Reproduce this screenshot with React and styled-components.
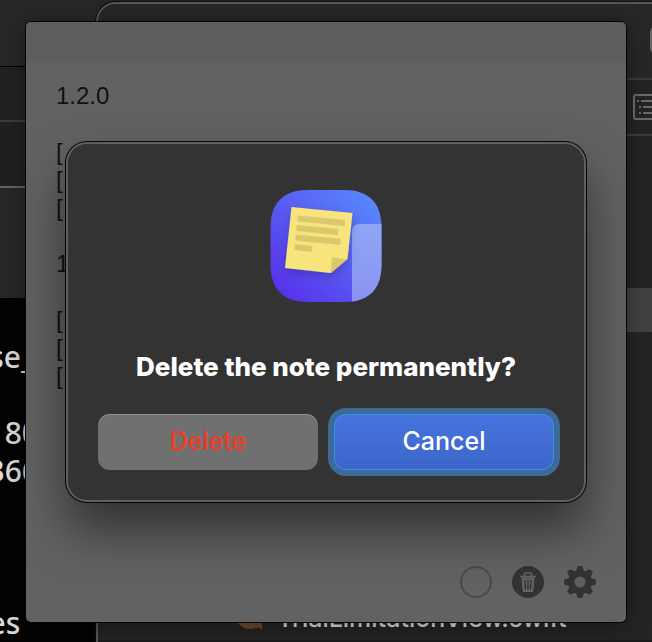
import React from "react";
import styled, { createGlobalStyle } from "styled-components";

const noteText = `1.2.0

[
[
[

1.1.0

[
[
[`;

const terminalLines = [
  { text: "se_\u2009", top: 337 },
  { text: "80", top: 413 },
  { text: "366", top: 451 },
  { text: "es\u00a0\u00a0\u200a", top: 603 },
];

const GlobalStyle = createGlobalStyle`
  * {
    box-sizing: border-box;
  }
  body {
    margin: 0;
    background: #202020;
  }
`;

const Desktop = styled.div`
  position: relative;
  min-height: 100vh;
  overflow: hidden;
  background: #262626;
  font-family: Inter, "Liberation Sans", sans-serif;
`;

const SideWindow = styled.div`
  position: absolute;
  inset: 0 auto 0 -62px;
  width: 160px;
  display: flex;
  flex-direction: column;
  background: #030303;
`;

const SideBar = styled.div`
  height: ${(props) => props.$height}px;
  background: ${(props) => props.$color};
  border-bottom: ${(props) => props.$line};
`;

const TerminalLine = styled.span`
  position: absolute;
  top: ${(props) => props.$top}px;
  right: 59px;
  font-family: "Noto Sans", sans-serif;
  font-size: 30px;
  font-weight: 500;
  line-height: 40px;
  white-space: pre;
  color: #dcdcdc;
`;

const EditorWindow = styled.div`
  position: absolute;
  inset: 2px -60px -40px 96px;
  display: flex;
  flex-direction: column;
  overflow: hidden;
  background: #242424;
  border: 2px solid #575757;
  border-radius: 20px;
  box-shadow: 0 0 0 1px #0a0a0a;
`;

const EditorToolbar = styled.div`
  display: flex;
  justify-content: flex-end;
  padding: 22px 18px 0 0;
  height: 76px;
  background: #272727;
  border-bottom: 2px solid #3b3b3b;
`;

const ToolbarField = styled.div`
  width: 42px;
  height: 28px;
  background: #686868;
  border-radius: 6px;
`;

const EditorTabs = styled.div`
  display: flex;
  align-items: center;
  justify-content: flex-end;
  height: 56px;
  padding-right: 49px;
  border-bottom: 2px solid #3b3b3b;
`;

const SelectedRow = styled.div`
  height: 44px;
  margin-top: 152px;
  background: #424242;
`;

const FileRow = styled.div`
  display: flex;
  align-items: center;
  gap: 14px;
  height: 46px;
  margin-top: 264px;
  padding-left: 137px;
  border-bottom: 2px solid #1c1b1b;
  font-size: 25px;
  font-weight: 500;
  color: #dddddd;
`;

const NoteWindow = styled.main`
  position: absolute;
  inset: 22px 26px 20px;
  display: flex;
  flex-direction: column;
  overflow: hidden;
  background: #626262;
  border-radius: 5px;
  box-shadow: 0 0 0 1px #050505, 0 4px 24px rgba(0, 0, 0, 0.4);
`;

const NoteTitleBar = styled.div`
  height: 40px;
  background: #5e5e5e;
`;

const NoteInput = styled.textarea`
  flex: 1;
  min-height: 0;
  padding: 20px 30px;
  border: 0;
  outline: 0;
  resize: none;
  overflow: hidden;
  background: transparent;
  font-family: "Liberation Sans", sans-serif;
  font-size: 24px;
  line-height: 28px;
  color: #111111;
`;

const NoteFooter = styled.div`
  display: flex;
  justify-content: flex-end;
  gap: 18px;
  padding: 0 29px 23px;
`;

const IconButton = styled.button`
  display: flex;
  padding: 0;
  border: 0;
  background: transparent;
  color: #333333;
`;

const DialogLayer = styled.div`
  position: absolute;
  inset: 22px 26px 20px;
  display: grid;
  place-items: center;
  overflow: hidden;
`;

const Dialog = styled.section`
  display: flex;
  flex-direction: column;
  align-items: center;
  width: calc(100% - 80px);
  max-width: 520px;
  padding: 45px 30px 30px;
  background: #333333;
  border: 2px solid #5f5f5f;
  border-radius: 21px;
  box-shadow: 0 0 0 1px #050505, 0 28px 50px rgba(0, 0, 0, 0.5);
`;

const DialogTitle = styled.h1`
  margin: 46px 0 29px;
  font-size: 26px;
  font-weight: 800;
  line-height: 36px;
  color: #ffffff;
`;

const DialogActions = styled.div`
  display: grid;
  grid-template-columns: 1fr 1fr;
  gap: 16px;
  width: 100%;
`;

const DialogButton = styled.button`
  height: 56px;
  padding: 0 0 2px;
  border: 0;
  border-radius: 12px;
  background: #707070;
  box-shadow: inset 0 1px #929292;
  font-family: inherit;
  font-size: 25px;
  font-weight: 500;
  color: #f23b22;
`;

const PrimaryButton = styled(DialogButton)`
  background: linear-gradient(#4674df, #3c66c8);
  box-shadow: inset 0 0 0 1px #438be8, 0 0 0 6px #3d6b98;
  color: #ffffff;
`;

function ListIcon() {
  return (
    <svg width="28" height="26" viewBox="0 0 28 26" fill="none" stroke="#6b6b6b" strokeWidth="2">
      <rect x="1" y="1" width="26" height="24" rx="2" />
      <path d="M4 7h2M8 7h12M6 13h2M10 13h12M6 19h2M10 19h12" />
    </svg>
  );
}

function SwiftIcon() {
  return (
    <svg width="28" height="24" viewBox="0 0 28 24" fill="#6c4930">
      <path d="M0 13c7 4 13 4 16 2C11 11 6 6 3 2c5 4 10 8 13 10-3-3-6-7-8-10 5 5 9 8 12 10 1-4 0-7-2-11 6 4 8 10 7 14 2 3 3 5 2 9-2-3-4-3-7-2-8 3-15-1-20-9z" />
    </svg>
  );
}

function AppIcon() {
  return (
    <svg width="112" height="114" viewBox="0 0 112 114">
      <defs>
        <linearGradient id="tile" x1="0.1" y1="0.9" x2="0.9" y2="0.05">
          <stop offset="0" stopColor="#5832eb" />
          <stop offset="1" stopColor="#5889fb" />
        </linearGradient>
        <linearGradient id="panel" x1="0" y1="0" x2="0" y2="1">
          <stop offset="0" stopColor="#8da7f5" />
          <stop offset="1" stopColor="#8c91f0" />
        </linearGradient>
        <clipPath id="shape">
          <path d="M38.500 1h35c26 0 38 13 38 38v36c0 25-12 38-38 38h-35c-26 0-38-13-38-38V39c0-25 12-38 38-38z" />
        </clipPath>
        <filter id="shade" x="-20%" y="-20%" width="140%" height="150%">
          <feDropShadow dx="0" dy="4" stdDeviation="5" floodOpacity="0.2" />
        </filter>
      </defs>
      <g clipPath="url(#shape)">
        <path d="M0 0h112v114H0z" fill="url(#tile)" />
        <path d="M82 114V43q0-8 8-8h22v79z" fill="url(#panel)" />
      </g>
      <path d="M21.500 18l61 6-5 46-17 14-45.500-5z" fill="#f8e47b" filter="url(#shade)" />
      <path d="M61 84l1-15.500 15.500 1.500z" fill="#d9c86d" />
      <path d="M27.500 29.500l47.500 4.500M26.500 39l41.500 4M25.500 48.500l45 4.500M24.500 58l17.500 2" stroke="#d9c86d" strokeWidth="6" />
    </svg>
  );
}

function CircleIcon() {
  return (
    <svg width="34" height="34" viewBox="0 0 34 34" fill="none" stroke="#494949" strokeWidth="2">
      <circle cx="17" cy="17" r="15" />
    </svg>
  );
}

function TrashIcon() {
  return (
    <svg width="34" height="34" viewBox="0 0 34 34">
      <circle cx="17" cy="17" r="16" fill="currentColor" />
      <g fill="none" stroke="#646464" strokeWidth="2">
        <path d="M9 11.500h16M13.500 11V9q0-1 1-1h5q1 0 1 1v2" strokeWidth="1.700" />
        <path d="M10.500 12.500l1 13q.1 1.500 1.500 1.500h8q1.400 0 1.500-1.500l1-13z" fill="#646464" stroke="none" />
        <path d="M14 14.500l.5 10M17 14.500v10M20 14.500l-.5 10" stroke="#333333" strokeWidth="1.400" />
      </g>
    </svg>
  );
}

function GearIcon() {
  return (
    <svg width="34" height="34" viewBox="0 0 34 34">
      {[0, 45, 90, 135].map((angle) => (
        <path
          key={angle}
          d="M15.500 1h3q1 0 1.200 1l1.800 6v18l-1.800 6q-.2 1-1.200 1h-3q-1 0-1.200-1l-1.800-6V8l1.800-6q.2-1 1.200-1z"
          fill="currentColor"
          transform={`rotate(${angle} 17 17)`}
        />
      ))}
      <circle cx="17" cy="17" r="12" fill="currentColor" />
      <circle cx="17" cy="17" r="5.500" fill="#606060" />
    </svg>
  );
}

function App() {
  return (
    <Desktop>
      <GlobalStyle />
      <SideWindow>
        <SideBar $height={67} $color="#272727" $line="1px solid #000000" />
        <SideBar $height={55} $color="#222222" $line="2px solid #3c3c3c" />
        <SideBar $height={66} $color="#202020" $line="2px solid #626262" />
        <SideBar $height={110} $color="#272727" $line="0" />
        {terminalLines.map((line) => (
          <TerminalLine key={line.top} $top={line.top}>
            {line.text}
          </TerminalLine>
        ))}
      </SideWindow>
      <EditorWindow>
        <EditorToolbar>
          <ToolbarField />
        </EditorToolbar>
        <EditorTabs>
          <ListIcon />
        </EditorTabs>
        <SelectedRow />
        <FileRow>
          <SwiftIcon />
          TrialLimitationView.swift
        </FileRow>
      </EditorWindow>
      <NoteWindow>
        <NoteTitleBar />
        <NoteInput aria-label="Note" defaultValue={noteText} spellCheck={false} />
        <NoteFooter>
          <IconButton aria-label="Color">
            <CircleIcon />
          </IconButton>
          <IconButton aria-label="Trash">
            <TrashIcon />
          </IconButton>
          <IconButton aria-label="Settings">
            <GearIcon />
          </IconButton>
        </NoteFooter>
      </NoteWindow>
      <DialogLayer>
        <Dialog role="alertdialog" aria-labelledby="dialog-title">
          <AppIcon />
          <DialogTitle id="dialog-title">Delete the note permanently?</DialogTitle>
          <DialogActions>
            <DialogButton>Delete</DialogButton>
            <PrimaryButton>Cancel</PrimaryButton>
          </DialogActions>
        </Dialog>
      </DialogLayer>
    </Desktop>
  );
}

export default App;
